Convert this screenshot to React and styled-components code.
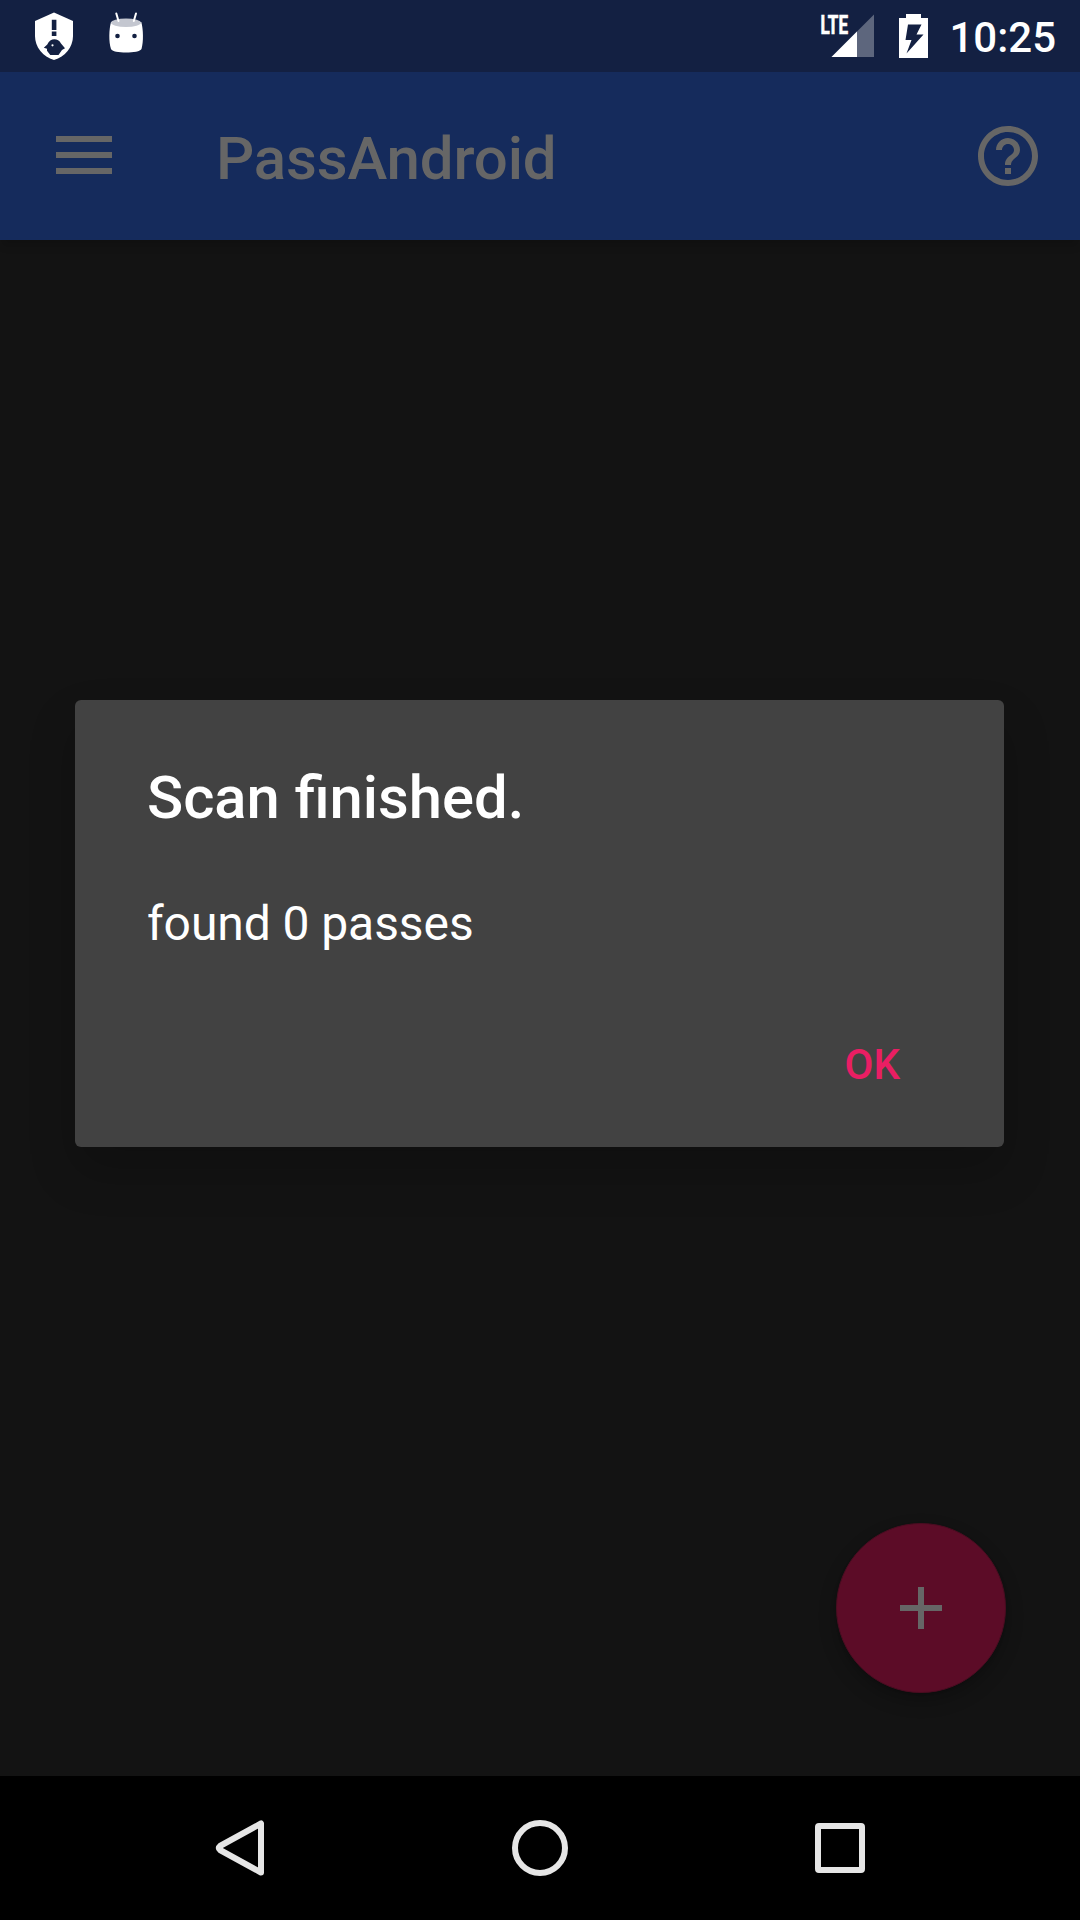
import React from 'react';
import styled, { createGlobalStyle } from 'styled-components';

const GlobalStyle = createGlobalStyle`
  * { box-sizing: border-box; }
  body { margin: 0; background: #131313; }
`;

const Screen = styled.div`
  position: relative;
  display: flex;
  flex-direction: column;
  width: 1080px;
  height: 1920px;
  overflow: hidden;
  background: #131313;
  font-family: Roboto, sans-serif;
  svg { display: block; flex: none; }
`;

const StatusBar = styled.header`
  display: flex;
  justify-content: space-between;
  height: 72px;
  padding: 0 24px 0 30px;
  background: #132042;
`;

const StatusGroup = styled.div`
  display: flex;
  align-items: flex-start;
  gap: ${(p) => p.$gap}px;
`;

const Clock = styled.time`
  margin-left: 21px;
  padding-top: 13px;
  color: #fff;
  font-size: 42px;
  font-weight: 500;
  line-height: 49px;
`;

const AppBar = styled.nav`
  display: flex;
  align-items: center;
  height: 168px;
  padding: 0 36px 0 48px;
  background: #152b5c;
  box-shadow: 0 8px 8px -2px rgba(0, 0, 0, 0.14);
`;

const IconButton = styled.button`
  display: flex;
  flex: none;
  padding: 0;
  border: 0;
  background: none;
  color: #666;
`;

const AppTitle = styled.h1`
  flex: 1;
  margin: 0 0 0 96px;
  padding-top: 6px;
  color: #666;
  font-size: 60px;
  font-weight: 500;
  letter-spacing: -0.15px;
  line-height: 70px;
`;

const Content = styled.main`
  display: flex;
  flex: 1;
  align-items: flex-end;
  justify-content: flex-end;
  padding: 0 74px 83px 0;
`;

const Fab = styled.button`
  display: flex;
  align-items: center;
  justify-content: center;
  width: 170px;
  height: 170px;
  padding: 0;
  border: 1px solid #4a0c21;
  border-radius: 50%;
  background: #5c0c27;
  color: #666;
  box-shadow: 0 8px 18px rgba(0, 0, 0, 0.24), 0 1px 3px rgba(0, 0, 0, 0.12);
`;

const DialogLayer = styled.div`
  position: absolute;
  inset: 72px 0 144px;
  display: flex;
  align-items: center;
  justify-content: center;
`;

const Dialog = styled.section`
  display: flex;
  flex-direction: column;
  width: 929px;
  height: 447px;
  margin: 0 1px 1px 0;
  padding: 63px 72px 0;
  border-radius: 6px;
  background: #424242;
  color: #fff;
  box-shadow: 0 24px 48px rgba(0, 0, 0, 0.2);
`;

const DialogTitle = styled.h2`
  margin: 0;
  font-size: 59.75px;
  font-weight: 500;
  line-height: 70px;
`;

const DialogText = styled.p`
  margin: 63px 0 0;
  font-size: 48px;
  letter-spacing: -0.08px;
  line-height: 56px;
`;

const DialogActions = styled.div`
  display: flex;
  justify-content: flex-end;
  margin-top: 88px;
  padding-right: 32px;
`;

const ActionButton = styled.button`
  padding: 0;
  border: 0;
  background: none;
  color: #e91e63;
  font: 500 42px/49px Roboto, sans-serif;
`;

const NavigationBar = styled.footer`
  display: grid;
  grid-template-columns: repeat(3, 300px);
  justify-content: center;
  align-items: center;
  justify-items: center;
  height: 144px;
  background: #000;
`;

const ShieldIcon = () => (
  <svg width="48" height="72" viewBox="30 0 48 72">
    <path fill="#fff" d="M54 12.500 73 21V36C73 47 65 57 54 60 43 57 35 47 35 36V21Z" />
    <path fill="#132042" d="M51.800 19.700h4.600v10.300H51.800zM51.800 31.500h4.600v4.500H51.800zM43.800 47.800 47.300 44.500C50 37.800 58 37.800 61 43.500L65 48.300 62 50 58.500 55H50.300L47 50.800V48.800Z" />
    <circle cx="52.500" cy="45.300" r="1.100" fill="#fff" />
  </svg>
);

const AndroidIcon = () => (
  <svg width="48" height="72" viewBox="102 0 48 72">
    <path fill="#fff" d="M111 22C109 29 108.600 42 111 49 112.500 53.700 139.500 53.700 141.500 49 143.700 42 143.300 29 141.300 22Z" />
    <ellipse cx="126" cy="22.700" rx="15" ry="4.200" fill="#c4c7d0" />
    <path d="M116.300 13.500 118.500 21M136 13.500 133.800 21" stroke="#fff" strokeWidth="2" strokeLinecap="round" />
    <circle cx="117.500" cy="36" r="2.300" fill="#132042" />
    <circle cx="134.500" cy="36" r="2.300" fill="#132042" />
  </svg>
);

const SignalIcon = () => (
  <svg width="56" height="72" viewBox="820 0 56 72">
    <path fill="#5d667d" d="M874 14.500V57H831.500Z" />
    <path fill="#fff" d="M857 31.500V57H831.500Z" />
    <text x="820.500" y="33.600" fill="#fff" stroke="#fff" strokeWidth="0.700" fontSize="26" fontWeight="700" textLength="27.500" lengthAdjust="spacingAndGlyphs">LTE</text>
  </svg>
);

const BatteryIcon = () => (
  <svg width="30" height="72" viewBox="898 0 30 72">
    <path fill="#fff" d="M906 14h15v4h7v40h-29V18h7Z" />
    <path fill="#132042" d="M908 24.500H921.500L916.500 34.500H923.500L906.500 53.500 911.500 40H905.500Z" />
  </svg>
);

const MenuIcon = () => (
  <svg width="72" height="72" viewBox="0 0 72 72" fill="currentColor">
    <path d="M8 16h56v6H8zM8 32h56v6H8zM8 48h56v6H8z" />
  </svg>
);

const HelpIcon = () => (
  <svg width="72" height="72" viewBox="0 0 24 24" fill="currentColor">
    <path d="M11 18h2v-2h-2v2zm1-16C6.480 2 2 6.480 2 12s4.480 10 10 10 10-4.480 10-10S17.520 2 12 2zm0 18c-4.410 0-8-3.590-8-8s3.590-8 8-8 8 3.590 8 8-3.590 8-8 8zm0-14c-2.210 0-4 1.790-4 4h2c0-1.100.900-2 2-2s2 .900 2 2c0 2-3 1.750-3 5h2c0-2.250 3-2.500 3-5 0-2.210-1.790-4-4-4z" />
  </svg>
);

const PlusIcon = () => (
  <svg width="42" height="42" viewBox="0 0 42 42" fill="currentColor">
    <path d="M18 0h6v18h18v6H24v18h-6V24H0v-6h18Z" />
  </svg>
);

const NavIcon = ({ children }) => (
  <svg width="60" height="60" viewBox="0 0 60 60" fill="none" stroke="#e6e6e6" strokeWidth="6" strokeLinejoin="round">
    {children}
  </svg>
);

export default function App() {
  return (
    <>
      <GlobalStyle />
      <Screen>
        <StatusBar>
          <StatusGroup $gap={24}>
            <ShieldIcon />
            <AndroidIcon />
          </StatusGroup>
          <StatusGroup $gap={0}>
            <StatusGroup $gap={22}>
              <SignalIcon />
              <BatteryIcon />
            </StatusGroup>
            <Clock>10:25</Clock>
          </StatusGroup>
        </StatusBar>
        <AppBar>
          <IconButton aria-label="Menu"><MenuIcon /></IconButton>
          <AppTitle>PassAndroid</AppTitle>
          <IconButton aria-label="Help"><HelpIcon /></IconButton>
        </AppBar>
        <Content>
          <Fab aria-label="Add"><PlusIcon /></Fab>
        </Content>
        <NavigationBar>
          <NavIcon><path d="M51 5.500V54.500L10 32Q7.500 30 10 28Z" /></NavIcon>
          <NavIcon><circle cx="30" cy="30" r="25" /></NavIcon>
          <NavIcon><rect x="8" y="8" width="44" height="44" rx="1" /></NavIcon>
        </NavigationBar>
        <DialogLayer>
          <Dialog role="dialog">
            <DialogTitle>Scan finished.</DialogTitle>
            <DialogText>found 0 passes</DialogText>
            <DialogActions>
              <ActionButton>OK</ActionButton>
            </DialogActions>
          </Dialog>
        </DialogLayer>
      </Screen>
    </>
  );
}
